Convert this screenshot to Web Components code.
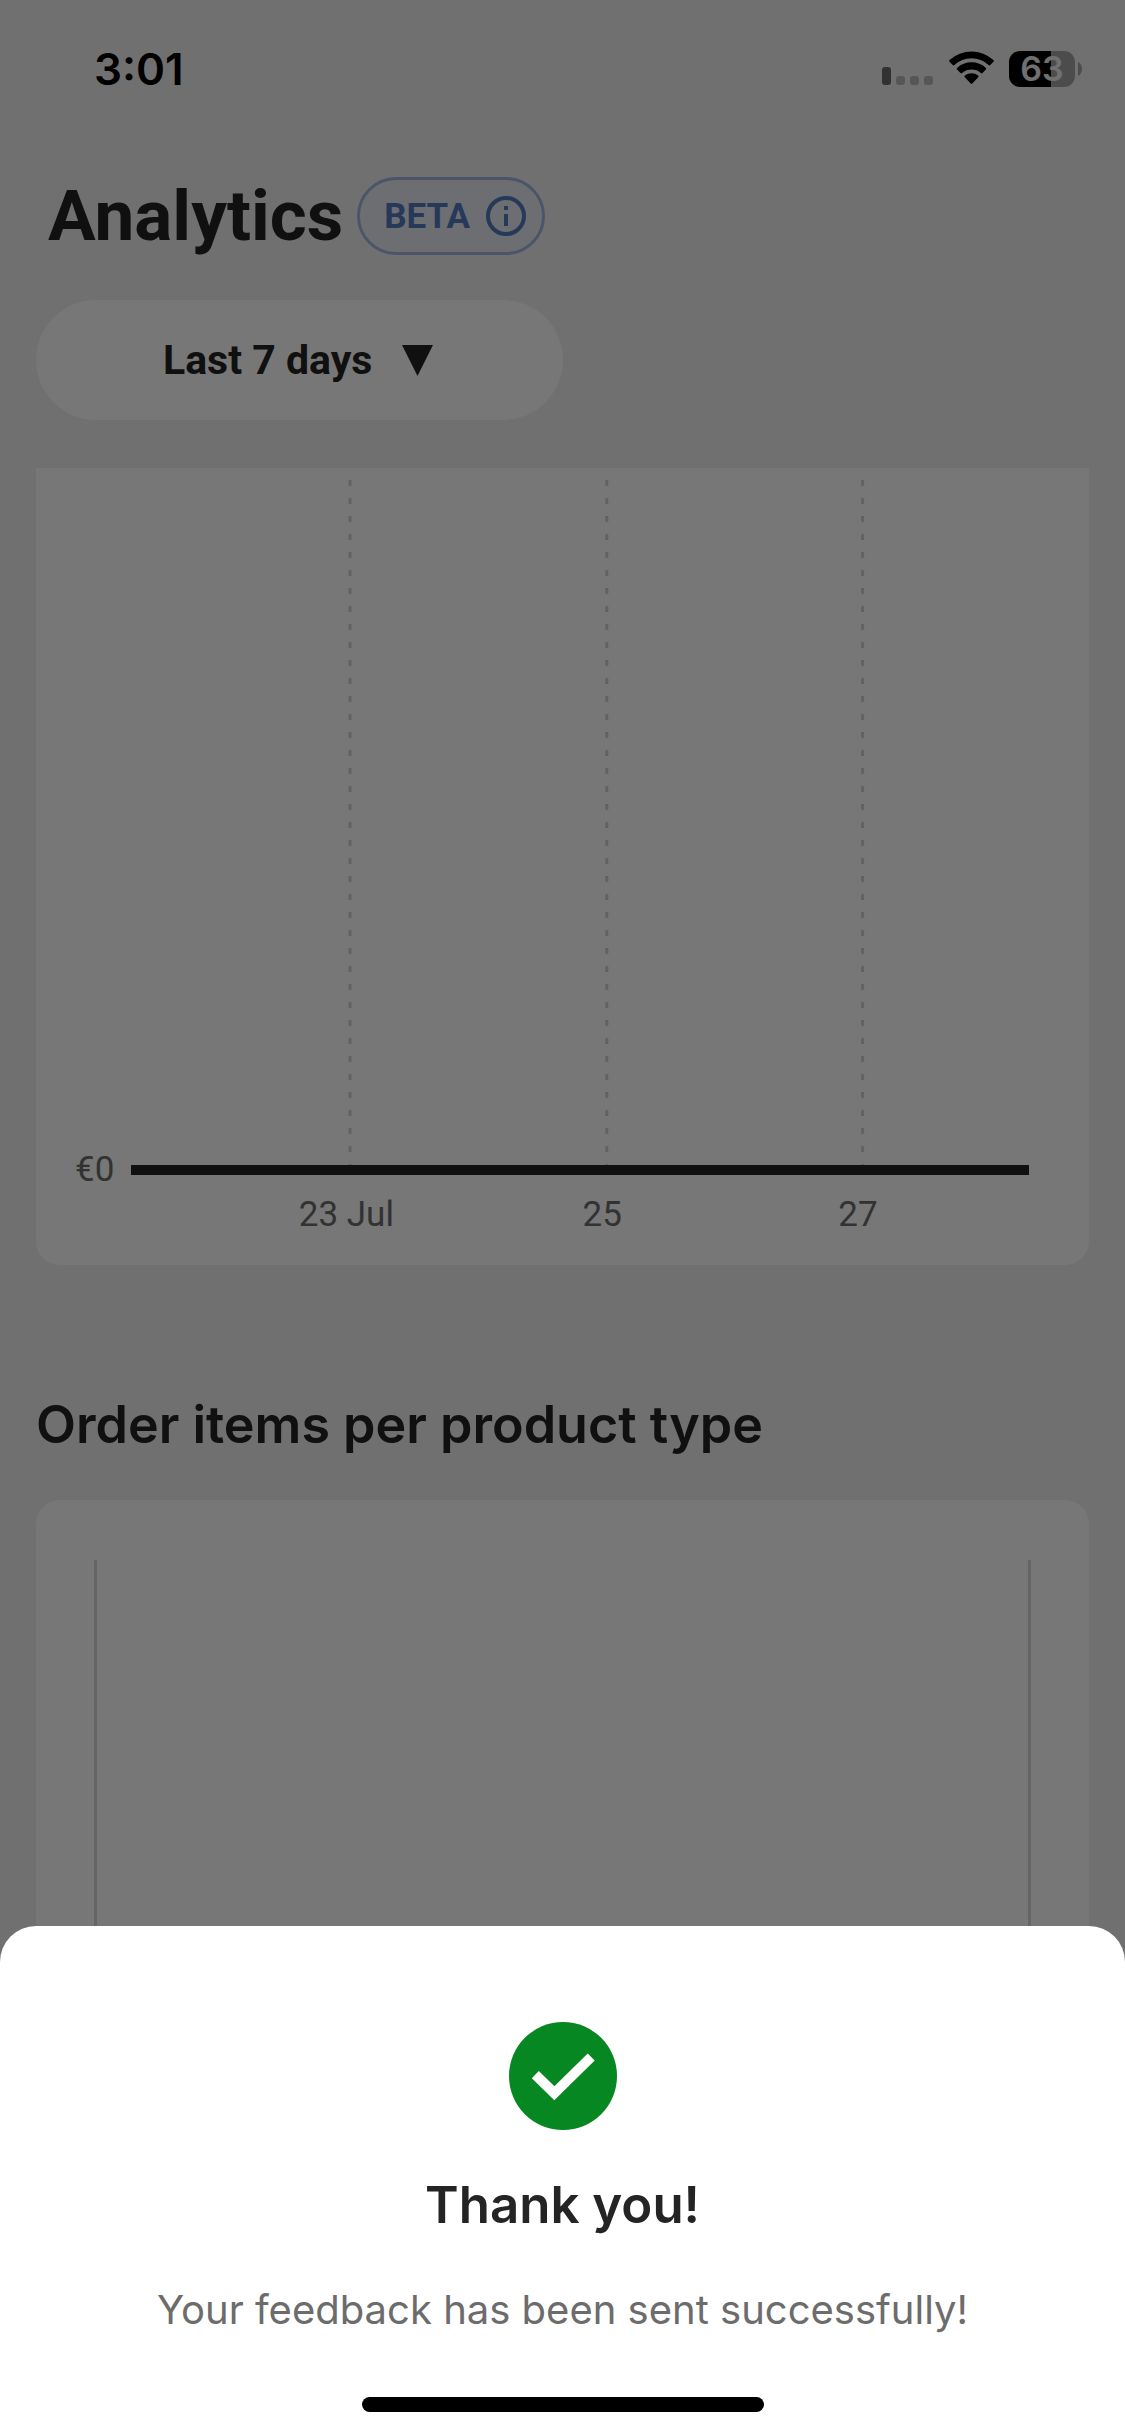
<!DOCTYPE html>
<html lang="en">
<head>
<meta charset="utf-8">
<meta name="viewport" content="width=device-width, initial-scale=1">
<title>Analytics</title>
<style>
    body {
        margin: 0;
        background: #efefef;
        color: #242424;
        font-family: Roboto, "Liberation Sans", sans-serif;
    }
</style>
</head>
<body>
<analytics-page>
    <status-bar time="3:01" battery="63"></status-bar>
    <page-header heading="Analytics">
        <info-badge>BETA</info-badge>
    </page-header>
    <period-select></period-select>
    <revenue-chart></revenue-chart>
    <section-title>Order items per product type</section-title>
    <product-chart></product-chart>
</analytics-page>
<success-sheet>
    <span slot="title">Thank you!</span>
    <span slot="message">Your feedback has been sent successfully!</span>
</success-sheet>

<script>
"use strict";

// Base class: every element renders its own template into an open root
class BaseElement extends HTMLElement {
    constructor() {
        super();
        this.attachShadow({mode: "open"});
    }

    connectedCallback() {
        this.shadowRoot.innerHTML = this.render();
    }
}

class AnalyticsPage extends BaseElement {
    render() {
        return `
            <style>
                :host {
                    display: flex;
                    flex-direction: column;
                    height: 100vh;
                    overflow: hidden;
                }
            </style>
            <slot></slot>
        `;
    }
}

class StatusBar extends BaseElement {
    render() {
        return `
            <style>
                :host {
                    display: flex;
                    justify-content: space-between;
                    align-items: center;
                    box-sizing: border-box;
                    height: 138px;
                    padding: 0 43px 0 94px;
                    color: #000;
                    font: 600 44px/48px Inter, sans-serif;
                }
                .icons {
                    display: flex;
                    align-items: center;
                    gap: 15px;
                }
                svg {display: block;}
                .battery {display: flex; align-items: center; gap: 3px;}
                .level {
                    width: 66px;
                    height: 36px;
                    border-radius: 11px;
                    background: linear-gradient(90deg, #000 64%, #a4a4a4 64%);
                    color: #efefef;
                    font-size: 34px;
                    line-height: 36px;
                    text-align: center;
                }
            </style>
            <time>${this.getAttribute("time")}</time>
            <div class="icons">
                <svg width="52" height="36" viewBox="0 0 52 36" aria-hidden="true">
                    <rect x="0" y="16" width="9" height="18" rx="3" fill="#6c6c6c"/>
                    <g fill="#b9b9b9">
                        <rect x="14" y="25" width="9" height="9" rx="3"/>
                        <rect x="28" y="25" width="9" height="9" rx="3"/>
                        <rect x="42" y="25" width="9" height="9" rx="3"/>
                    </g>
                </svg>
                <svg width="45" height="36" viewBox="0 0 45 36" aria-hidden="true">
                    <path d="M.5 10.8a1.2 1.2 0 0 1 .1-1.7A32.5 32.5 0 0 1 44.4 9.1a1.2 1.2 0 0 1 .1 1.7l-3.300 3.300a1.2 1.2 0 0 1-1.600 0a25 25 0 0 0-34.200 0a1.2 1.2 0 0 1-1.600 0z"/>
                    <path d="M8.100 18.600a1.2 1.2 0 0 1 0-1.700a21.500 21.500 0 0 1 28.800 0a1.2 1.2 0 0 1 0 1.700l-3.400 3.400a1.2 1.2 0 0 1-1.600 0a14.500 14.500 0 0 0-18.800 0a1.2 1.2 0 0 1-1.600 0z"/>
                    <path d="M15.800 26.300a1.2 1.2 0 0 1 0-1.700a10.500 10.500 0 0 1 13.400 0a1.2 1.2 0 0 1 0 1.700l-5.900 6.200a1.2 1.2 0 0 1-1.600 0z"/>
                </svg>
                <div class="battery">
                    <div class="level">${this.getAttribute("battery")}</div>
                    <svg width="4" height="14" viewBox="0 0 4 14" aria-hidden="true">
                        <path d="M0 0c2.500 1 4 4 4 7s-1.500 6-4 7z" fill="#a4a4a4"/>
                    </svg>
                </div>
            </div>
        `;
    }
}

class PageHeader extends BaseElement {
    render() {
        return `
            <style>
                :host {
                    display: flex;
                    align-items: center;
                    gap: 14px;
                    padding: 39px 36px 0 48px;
                }
                h1 {
                    margin: 0;
                    font-size: 71px;
                    line-height: 78px;
                    font-weight: 700;
                }
            </style>
            <h1>${this.getAttribute("heading")}</h1>
            <slot></slot>
        `;
    }
}

class InfoBadge extends BaseElement {
    render() {
        return `
            <style>
                :host {display: block;}
                button {
                    display: flex;
                    align-items: center;
                    gap: 16px;
                    height: 78px;
                    padding: 0 16px 0 24px;
                    border: 3px solid #a2b5e2;
                    border-radius: 39px;
                    background: #e9ecf3;
                    color: #537ac2;
                    font: 700 35px/42px Roboto, sans-serif;
                }
                span {padding-top: 2px;}
            </style>
            <button type="button">
                <span><slot></slot></span>
                <svg width="40" height="40" viewBox="0 0 40 40" fill="none" stroke="currentColor" aria-hidden="true">
                    <circle cx="20" cy="20" r="18" stroke-width="4"/>
                    <path d="M20 10v4M20 18v12" stroke-width="4"/>
                </svg>
            </button>
        `;
    }
}

class PeriodSelect extends BaseElement {
    render() {
        return `
            <style>
                :host {
                    display: grid;
                    align-items: center;
                    width: 50%;
                    min-width: 480px;
                    box-sizing: border-box;
                    padding: 45px 0 0 36px;
                }
                select, svg {grid-area: 1 / 1;}
                select {
                    appearance: none;
                    width: 100%;
                    height: 120px;
                    padding: 0 0 0 127px;
                    border: 0;
                    border-radius: 60px;
                    background: #fff;
                    color: inherit;
                    font: 700 41px/60px Roboto, sans-serif;
                }
                svg {
                    justify-self: end;
                    margin-right: 130px;
                    pointer-events: none;
                }
            </style>
            <select aria-label="Period">
                <option>Last 7 days</option>
                <option>Last 30 days</option>
            </select>
            <svg width="31" height="31" viewBox="0 0 31 31" aria-hidden="true">
                <path d="M0 0h31L15.500 31z" fill="#242424"/>
            </svg>
        `;
    }
}

class RevenueChart extends BaseElement {
    render() {
        return `
            <style>
                :host {
                    display: grid;
                    grid-template-columns: auto 1fr;
                    column-gap: 17px;
                    margin: 48px 36px 0;
                    padding: 12px 60px 0 39px;
                    border-radius: 0 0 24px 24px;
                    background: #fff;
                    color: #6c6c6c;
                    font-size: 35px;
                    line-height: 42px;
                }
                .value {align-self: end; margin-bottom: -16px;}
                .plot {
                    height: 685px;
                    border-bottom: 10px solid #242424;
                }
                svg {display: block; width: 100%; height: 100%;}
                .days {
                    grid-column: 2;
                    display: grid;
                    grid-template-columns: 9.7% repeat(3, 28.5%);
                    padding: 19px 0 29px;
                    text-align: center;
                }
                .days span:first-child {grid-column: 2;}
            </style>
            <span class="value">€0</span>
            <div class="plot">
                <svg stroke="#d2d2d2" stroke-width="3" stroke-dasharray="6 12" aria-hidden="true">
                    <line x1="24.4%" y1="0" x2="24.4%" y2="100%"/>
                    <line x1="53%" y1="0" x2="53%" y2="100%"/>
                    <line x1="81.5%" y1="0" x2="81.5%" y2="100%"/>
                </svg>
            </div>
            <div class="days"><span>23 Jul</span><span>25</span><span>27</span></div>
        `;
    }
}

class SectionTitle extends BaseElement {
    render() {
        return `
            <style>
                :host {display: block; padding: 130px 36px 45px;}
                h2 {
                    margin: 0;
                    font: 600 52px/60px Inter, sans-serif;
                }
            </style>
            <h2><slot></slot></h2>
        `;
    }
}

class ProductChart extends BaseElement {
    render() {
        return `
            <style>
                :host {
                    display: flex;
                    flex: 1;
                    margin: 0 36px;
                    padding: 60px 58px 0;
                    border-radius: 24px 24px 0 0;
                    background: #fff;
                }
                .plot {
                    flex: 1;
                    border: solid #d8d8d8;
                    border-width: 0 3px;
                }
            </style>
            <div class="plot"></div>
        `;
    }
}

class SuccessSheet extends BaseElement {
    render() {
        return `
            <style>
                :host {
                    position: fixed;
                    inset: 0;
                    display: flex;
                    align-items: flex-end;
                    background: rgba(0, 0, 0, .535);
                    font-family: Inter, sans-serif;
                }
                .sheet {
                    flex: 1;
                    display: flex;
                    flex-direction: column;
                    align-items: center;
                    padding: 96px 36px 24px;
                    border-radius: 36px 36px 0 0;
                    background: #fff;
                    text-align: center;
                }
                h2 {
                    margin: 45px 0;
                    font-size: 51px;
                    line-height: 60px;
                    font-weight: 600;
                }
                p {
                    margin: 0 0 57px;
                    color: #6c6c6c;
                    font-size: 40px;
                    line-height: 60px;
                }
                .home {
                    width: 402px;
                    height: 15px;
                    border-radius: 8px;
                    background: #000;
                }
            </style>
            <div class="sheet" role="dialog" aria-labelledby="title">
                <svg width="108" height="108" viewBox="0 0 108 108" aria-hidden="true">
                    <circle cx="54" cy="54" r="54" fill="#068722"/>
                    <path d="M26.300 52.700L45.300 71.200L82.200 35" fill="none" stroke="#fff" stroke-width="10"/>
                </svg>
                <h2 id="title"><slot name="title"></slot></h2>
                <p><slot name="message"></slot></p>
                <div class="home"></div>
            </div>
        `;
    }
}

customElements.define("analytics-page", AnalyticsPage);
customElements.define("status-bar", StatusBar);
customElements.define("page-header", PageHeader);
customElements.define("info-badge", InfoBadge);
customElements.define("period-select", PeriodSelect);
customElements.define("revenue-chart", RevenueChart);
customElements.define("section-title", SectionTitle);
customElements.define("product-chart", ProductChart);
customElements.define("success-sheet", SuccessSheet);
</script>
</body>
</html>
